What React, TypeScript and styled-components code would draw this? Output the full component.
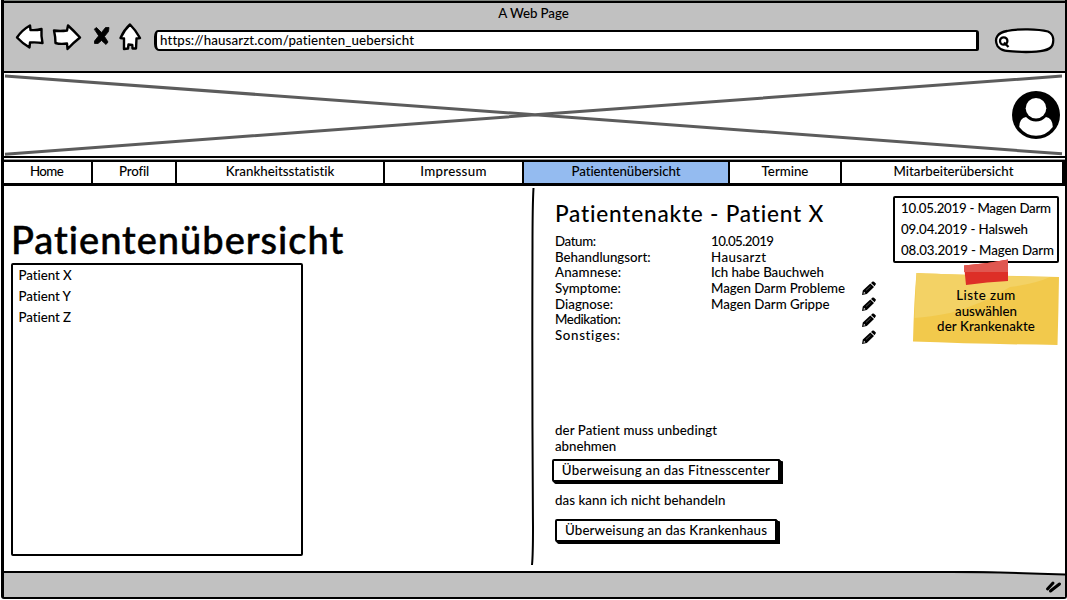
import React from "react";
import styled, { createGlobalStyle } from "styled-components";

const ink = "#000";
const chrome = "#c1c1c1";

const Global = createGlobalStyle`
  * { box-sizing: border-box; }
  body {
    margin: 0;
    background: #fff;
    color: ${ink};
    font: 500 13.3px/16px Lato, "Open Sans", sans-serif;
    font-variant-ligatures: none;
  }
  h1, h2, p, ul, dl, dd, dt { margin: 0; padding: 0; font-weight: 500; }
  ul { list-style: none; }
`;

const Window = styled.div`
  display: flex;
  flex-direction: column;
  width: 1066px;
  height: 599px;
  margin-left: 1px;
  border: 2px solid ${ink};
  border-left-width: 3px;
  border-top: 0;
  border-radius: 0 0 3px 3px;
  overflow: hidden;
`;

const Text = styled.span<{ $track?: number }>`
  letter-spacing: ${(p) => p.$track ?? 0}px;
  white-space: nowrap;
`;

const Chrome = styled.header`
  flex: none;
  height: 73px;
  background: ${chrome};
  border-top: 1px solid #808580;
  border-bottom: 2px solid ${ink};
  box-shadow: inset 0 2px ${ink};
`;

const PageTitle = styled.div`
  padding: 4px 2px 0 0;
  text-align: center;
`;

const Toolbar = styled.div`
  display: flex;
  align-items: flex-start;
  height: 34px;
  padding-left: 11px;
`;

const NavIcons = styled.svg`
  display: block;
  flex: none;
  width: 130px;
  height: 32px;
  margin-top: -1px;
`;

const AddressBar = styled.div`
  display: flex;
  align-items: center;
  width: 825px;
  height: 21px;
  margin: 9px 0 0 9px;
  padding: 0 0 1px 3px;
  background: #fff;
  border: 2px solid ${ink};
  border-left-width: 3px;
  border-right-width: 3px;
  border-radius: 4px 3px 2px 5px / 7px 3px 2px 7px;
`;

const SearchShape = styled.svg`
  display: block;
  flex: none;
  width: 62px;
  height: 28px;
  margin: 6px 0 0 14px;
`;

const Banner = styled.section`
  display: grid;
  flex: none;
  height: 85px;
  border-bottom: 2px solid ${ink};
  > * { grid-area: 1 / 1; }
`;

const Cross = styled.svg`
  display: block;
  width: 1061px;
  height: 83px;
`;

const Avatar = styled.svg`
  width: 48px;
  height: 48px;
  justify-self: end;
  margin: 18px 5px 0 0;
`;

const Nav = styled.nav`
  display: flex;
  flex: none;
  height: 26px;
  margin-top: 2px;
  border: 2px solid ${ink};
  border-width: 2px 3px 3px 0;
  box-shadow: 0 -1px #999;
`;

const NavItem = styled.a<{ $width: number; $active?: boolean }>`
  display: flex;
  align-items: center;
  justify-content: center;
  flex: none;
  width: ${(p) => p.$width}px;
  padding-bottom: 3px;
  background: ${(p) => (p.$active ? "#94bbf0" : "#fff")};
  border-right: 2px solid ${ink};
  &:first-child { padding-right: 2px; }
  &:last-child { flex: 1; padding-left: 3px; border-right: 0; }
`;

const Main = styled.main`
  display: flex;
  flex: 1;
  min-height: 0;
`;

const Overview = styled.section`
  flex: none;
  width: 525px;
  padding: 27px 0 0 7px;
`;

const PageHeading = styled.h1`
  height: 50px;
  font-size: 38px;
  line-height: 52px;
  -webkit-text-stroke: 0.5px ${ink};
`;

const PatientList = styled.ul`
  width: 292px;
  height: 293px;
  border: 2.5px solid ${ink};
  border-radius: 2px;
  padding-left: 5.5px;
`;

const ListRow = styled.li`
  height: 21px;
  line-height: 21px;
`;

const Divider = styled.svg`
  display: block;
  flex: none;
  width: 6px;
  height: 380px;
  margin-top: 1px;
`;

const RecordPanel = styled.section`
  flex: none;
  width: 358px;
  padding: 14px 0 0 20px;
`;

const RecordHeading = styled.h2`
  height: 33px;
  font-size: 22.6px;
  line-height: 28px;
`;

const RecordBody = styled.div`
  display: flex;
  height: 188.5px;
`;

const Fields = styled.dl`
  display: grid;
  flex: none;
  grid-template-columns: 156px 151px;
  grid-auto-rows: 15.7px;
  height: 110px;
  line-height: 16px;
`;

const EditColumn = styled.div`
  display: flex;
  flex-direction: column;
  gap: 2px;
  height: 112px;
  padding-top: 47.5px;
`;

const EditIcon = styled.svg`
  display: block;
  width: 14px;
  height: 14.4px;
`;

const Note = styled.p<{ $top?: number }>`
  height: 37px;
  padding-top: ${(p) => p.$top ?? 0}px;
`;

const ReferralButton = styled.button<{ $width: number; $indent: number }>`
  display: flex;
  align-items: center;
  justify-content: center;
  width: ${(p) => p.$width}px;
  height: 23px;
  margin: 0 0 0 ${(p) => p.$indent}px;
  padding: 0;
  color: inherit;
  font: inherit;
  background: #fff;
  border: 2px solid ${ink};
  border-radius: 2px 1px 0 2px;
  box-shadow: 1px 1px ${ink}, 2px 2px ${ink}, 3px 2px ${ink};
`;

const Aside = styled.aside`
  flex: 1;
  padding-top: 10px;
`;

const DateList = styled.ul`
  width: 166px;
  height: 67px;
  padding-left: 6px;
  border: 2.5px solid ${ink};
  border-radius: 2px;
`;

const Sticky = styled.div`
  display: grid;
  width: 148px;
  height: 88px;
  margin: -4px 0 0 19px;
  > * { grid-area: 1 / 1; }
`;

const StickyPaper = styled.svg`
  display: block;
  position: relative;
  width: 148px;
  height: 88px;
`;

const StickyText = styled.div`
  display: flex;
  flex-direction: column;
  align-items: center;
  position: relative;
  padding-top: 29px;
  line-height: 15.6px;
`;

const StatusBar = styled.footer`
  display: flex;
  justify-content: flex-end;
  flex: none;
  height: 26px;
  background: ${chrome};
  border-top: 2px solid ${ink};
`;

const Grip = styled.svg`
  display: block;
  width: 114px;
  height: 26px;
  margin-top: -2px;
`;

const tabs = [
  { label: "Home", width: 89, track: -0.6 },
  { label: "Profil", width: 84, track: -0.2 },
  { label: "Krankheitsstatistik", width: 208, track: -0.01 },
  { label: "Impressum", width: 139, track: 0.28 },
  { label: "Patientenübersicht", width: 206, track: -0.07, active: true },
  { label: "Termine", width: 112, track: -0.02 },
  { label: "Mitarbeiterübersicht", width: 220, track: -0.04 },
];

const fields: [string, number, string, number][] = [
  ["Datum:", -0.4, "10.05.2019", -0.55],
  ["Behandlungsort:", -0.03, "Hausarzt", 0.4],
  ["Anamnese:", 0.16, "Ich habe Bauchweh", -0.06],
  ["Symptome:", 0.01, "Magen Darm Probleme", -0.06],
  ["Diagnose:", 0.01, "Magen Darm Grippe", -0.03],
  ["Medikation:", -0.4, "", 0],
  ["Sonstiges:", 0.65, "", 0],
];

const records: [string, number][] = [
  ["10.05.2019 - Magen Darm", -0.25],
  ["09.04.2019 - Halsweh", -0.16],
  ["08.03.2019 - Magen Darm", -0.12],
];

const Pencil = () => (
  <EditIcon viewBox="0 0 14 14">
    <path d="M0 13.7 L.8 9.2 L8.3 2.4 L12 5.8 L4.8 12.8 Z M9 1.8 L10.6 .4 Q11.3 0 12 .5 L13.6 2 Q14.2 2.7 13.6 3.4 L12.6 5 Z" />
    <path d="M1.5 12.6 L2 10.6 L3.4 12 Z" fill="#fff" />
    <path d="M4 9.2 L8.6 5" stroke="#777" strokeWidth=".7" />
  </EditIcon>
);

export default function App() {
  return (
    <>
      <Global />
      <Window>
        <Chrome>
          <PageTitle>
            <Text $track={-0.08}>A Web Page</Text>
          </PageTitle>
          <Toolbar>
            <NavIcons viewBox="15 20 130 32" fill="#fff" stroke={ink} strokeWidth="2.4" strokeLinejoin="round" strokeLinecap="round">
              <path d="M17 37.5 Q22 30 30 25.5 L30.5 30 Q37 30.5 41.5 29 Q41 36 42.5 43 Q36 42 30 42.5 L29.5 47.5 Q22 43 17 37.5 Z" />
              <path d="M54 30.5 Q60 31.5 67 30.5 L68 25.5 Q74 31 80 37.5 Q73 43 67.5 49 L67 43.5 Q60 44.5 55.5 43 Q55.5 37 54 30.5 Z" />
              <path d="M94.5 29 L96.5 27.5 L101.5 32.5 L105.5 27.5 L109 27.5 L108.5 31.5 L104.5 36.5 L108 42 L106 44.5 L101.5 40.5 L98 43.5 L94.5 43.5 L94.5 41 L98.5 36 Z" fill={ink} strokeWidth=".8" />
              <path d="M130 24.5 Q136 30.5 140 38 L136.5 38.5 L136 48.5 L132.5 48.5 L132.3 45 L128.5 44.5 L128 48.5 L124 49 L124 38.5 L120.5 38 Q124 30 130 24.5 Z" />
            </NavIcons>
            <AddressBar>
              <Text $track={0.12}>https://hausarzt.com/patienten_uebersicht</Text>
            </AddressBar>
            <SearchShape viewBox="993 27 62 28" fill="none" stroke={ink} strokeWidth="2.3">
              <path d="M1007 31 C1018 28.5 1038 29 1048 31.5 C1053.5 34 1054 40 1052.5 45 C1050 51 1040 52 1026 52 C1012 51 1002 53 997.5 46 C993.5 38 998 32.5 1007 31 Z" fill="#fff" />
              <circle cx="1003.7" cy="41" r="3.7" />
              <path d="M1004 42.5 L1008.5 47" />
            </SearchShape>
          </Toolbar>
        </Chrome>

        <Banner>
          <Cross viewBox="4 73 1061 83" stroke="#5c5c5c" strokeWidth="3">
            <path d="M5 76 L535 114.8 L1062 153.8 M5 154.2 L535 114.8 L1062 76" fill="none" />
          </Cross>
          <Avatar viewBox="0 0 48 48">
            <circle cx="24" cy="24" r="24" />
            <path d="M14 26 Q18.5 30.5 24 30.5 Q29.5 30.5 34 26 Q40.5 27 40.8 36 Q34 44.8 24 44.8 Q14 44.8 7.2 36 Q7.5 27 14 26 Z" fill="#fff" />
            <circle cx="24" cy="17.3" r="12" />
            <circle cx="24" cy="17.3" r="10.3" fill="#fff" />
          </Avatar>
        </Banner>

        <Nav>
          {tabs.map((t) => (
            <NavItem key={t.label} $width={t.width} $active={t.active}>
              <Text $track={t.track}>{t.label}</Text>
            </NavItem>
          ))}
        </Nav>

        <Main>
          <Overview>
            <PageHeading>
              <Text $track={0.98}>Patientenübersicht</Text>
            </PageHeading>
            <PatientList>
              {["Patient X", "Patient Y", "Patient Z"].map((name) => (
                <ListRow key={name}>
                  <Text $track={-0.05}>{name}</Text>
                </ListRow>
              ))}
            </PatientList>
          </Overview>

          <Divider viewBox="0 0 6 380" fill="none" stroke={ink}>
            <path d="M4.5 1 Q3.5 18 3.5 60 Q3 200 4 340 Q4 368 3 378" strokeWidth="2" />
          </Divider>

          <RecordPanel>
            <RecordHeading>
              <Text $track={0.79}>Patientenakte - Patient X</Text>
            </RecordHeading>
            <RecordBody>
              <Fields>
                {fields.map(([name, nameTrack, value, valueTrack]) => (
                  <React.Fragment key={name}>
                    <dt>
                      <Text $track={nameTrack}>{name}</Text>
                    </dt>
                    <dd>
                      <Text $track={valueTrack}>{value}</Text>
                    </dd>
                  </React.Fragment>
                ))}
              </Fields>
              <EditColumn>
                <Pencil />
                <Pencil />
                <Pencil />
                <Pencil />
              </EditColumn>
            </RecordBody>
            <Note>
              <Text $track={0.08}>der Patient muss unbedingt</Text>
              <br />
              <Text $track={-0.04}>abnehmen</Text>
            </Note>
            <ReferralButton $width={228} $indent={-3}>
              <Text $track={0.25}>Überweisung an das Fitnesscenter</Text>
            </ReferralButton>
            <Note $top={10}>
              <Text $track={0.05}>das kann ich nicht behandeln</Text>
            </Note>
            <ReferralButton $width={222} $indent={0}>
              <Text $track={0.16}>Überweisung an das Krankenhaus</Text>
            </ReferralButton>
          </RecordPanel>

          <Aside>
            <DateList>
              {records.map(([label, track]) => (
                <ListRow key={label}>
                  <Text $track={track}>{label}</Text>
                </ListRow>
              ))}
            </DateList>
            <Sticky>
              <StickyPaper viewBox="912 259 148 88">
                <path d="M916.5 273 Q960 275 1059 277 Q1058.5 310 1057.5 345 Q980 344 913 341.5 Q914 300 916.5 273 Z" fill="#f2c94c" />
                <path d="M916.5 273 Q960 275 1050 277 Q1035 284 1010 287 Q985 303 950 313 Q930 317 914.5 318 Z" fill="#f3d265" />
                <path d="M964 265.5 Q986 264 1008 259.5 L1008 281 Q987 282 966 285 Z" fill="#dd2f27" />
                <path d="M964 265.5 Q986 264 1008 259.5 L1008 272 L964 272 Z" fill="#e05750" />
              </StickyPaper>
              <StickyText>
                <Text $track={0.44}>Liste zum</Text>
                <Text>auswählen</Text>
                <Text $track={0.09}>der Krankenakte</Text>
              </StickyText>
            </Sticky>
          </Aside>
        </Main>

        <StatusBar>
          <Grip viewBox="0 0 114 26" fill="none" stroke={ink} strokeLinecap="round">
            <path d="M20 0 H114 V3.5 Z" fill="#fff" stroke="none" />
            <path d="M0 1 Q50 1 116 3.5" strokeWidth="2" />
            <path d="M96.500 18 L102 12 M99.500 20 L108.500 13" strokeWidth="3" />
          </Grip>
        </StatusBar>
      </Window>
    </>
  );
}
